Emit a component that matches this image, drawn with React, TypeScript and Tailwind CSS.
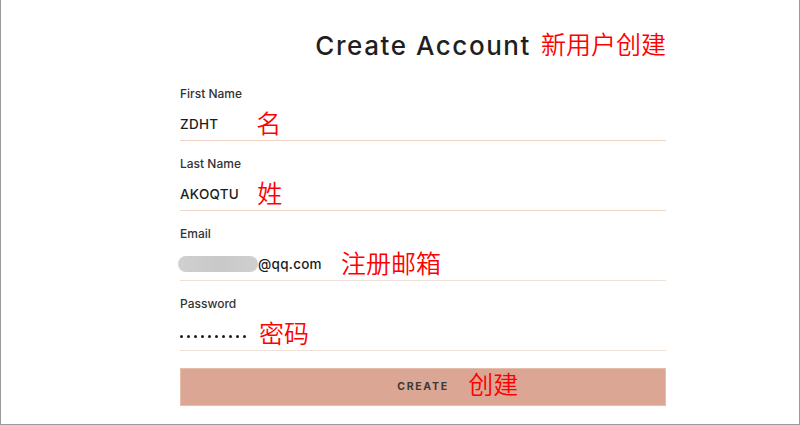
import type { ReactNode } from 'react';

const cjk = '"Noto Sans CJK SC", "Noto Sans", sans-serif';
const latin = 'Inter, "Noto Sans", sans-serif';

function Note({ children, className = '' }: { children: ReactNode; className?: string }) {
    return (
        <span
            className={`whitespace-nowrap text-[25px] font-[350] leading-none tracking-normal text-[#ff0000] ${className}`}
            style={{ fontFamily: cjk }}
        >
            {children}
        </span>
    );
}

function Field({ label, value, note, noteGap, line }: { label: string; value: ReactNode; note: string; noteGap: string; line: string }) {
    return (
        <div className={`border-b ${line} pb-[2px]`}>
            <div className="h-4 text-[12px] leading-4 font-medium text-[#333]">{label}</div>
            <div className="mt-2 flex h-7 items-center">
                <div className="text-[13.5px] font-medium tracking-[0.02em] text-[#1c1c1c]">{value}</div>
                <Note className={`relative top-[-2px] ${noteGap}`}>{note}</Note>
            </div>
        </div>
    );
}

export default function App() {
    return (
        <div className="h-[425px] w-[800px] overflow-hidden border-x border-b border-[#9a9a9a] bg-white" style={{ fontFamily: latin }}>
            <div className="ml-[179px] w-[486px] pt-[30px]">
                {/* Title */}
                <div className="flex h-[30px] items-center justify-end">
                    <h1 className="text-[26px] font-medium tracking-[0.06em] text-[#1f1f1f]">Create Account</h1>
                    <Note className="relative top-[-2px] ml-[10px]">新用户创建</Note>
                </div>

                <div className="mt-[26px] flex flex-col gap-[15px]">
                    <Field label="First Name" value="ZDHT" note="名" noteGap="ml-[38px]" line="border-[#f0d3c0]" />
                    <Field label="Last Name" value="AKOQTU" note="姓" noteGap="ml-[18px]" line="border-[#f0d6c5]" />
                    <Field
                        label="Email"
                        value={
                            <span className="flex items-center">
                                <span className="ml-[-2px] h-[16px] w-[80px] rounded-full bg-gradient-to-r from-[#d0d0d0] via-[#c9c9c9] to-[#cfcfcf]" />
                                <span>@qq.com</span>
                            </span>
                        }
                        note="注册邮箱"
                        noteGap="ml-[19px]"
                        line="border-[#eee1d7]"
                    />
                    <Field
                        label="Password"
                        value={
                            <span className="flex gap-[4px] pt-[4px]">
                                {Array.from({ length: 10 }).map((_, i) => (
                                    <span key={i} className="h-[3px] w-[3px] rounded-full bg-[#1c1c1c]" />
                                ))}
                            </span>
                        }
                        note="密码"
                        noteGap="ml-[13px]"
                        line="border-[#eee1d7]"
                    />
                </div>

                <button className="mt-[17px] flex h-[38px] w-full items-center justify-center border border-[#e6bcab] bg-[#dba694]">
                    <span className="relative text-[10.5px] font-bold tracking-[0.16em] text-[#3a3a3a]">
                        CREATE
                        <Note className="absolute left-[71px] top-[-8px]">创建</Note>
                    </span>
                </button>
            </div>
        </div>
    );
}
